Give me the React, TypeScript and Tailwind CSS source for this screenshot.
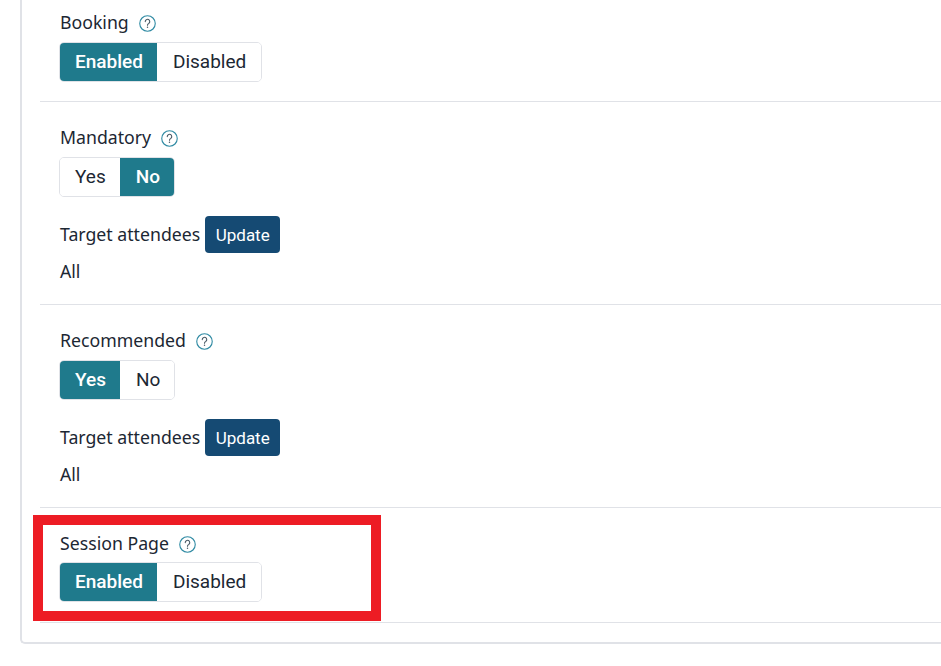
import type { ReactNode } from "react";

function HelpIcon() {
  return (
    <svg width="17" height="17" viewBox="0 0 16 16" fill="none" className="mt-[3px] shrink-0">
      <circle cx="8" cy="8" r="7.3" stroke="#2f8aa3" strokeWidth="1.05" />
      <path d="M5.9 6.2a2.1 2.1 0 1 1 3.3 1.7c-.8.5-1.2.9-1.2 1.8" stroke="#4a5a66" strokeWidth="1.05" strokeLinecap="round" />
      <circle cx="8" cy="11.6" r="0.7" fill="#4a5a66" />
    </svg>
  );
}

function Label({ text }: { text: string }) {
  return (
    <div className="flex h-[24px] items-center gap-[10px] pl-[1px] font-['Noto_Sans',sans-serif] text-[17.7px] text-[#1c2733]">
      <span>{text}</span>
      <HelpIcon />
    </div>
  );
}

function Toggle({ options, active, className }: { options: string[]; active: string; className: string }) {
  return (
    <div className={"flex h-[40px] w-fit overflow-hidden rounded-[5px] border border-[#e0e2e7] font-['Roboto',sans-serif] text-[19px] " + className}>
      {options.map((o, i) => (
        <div
          key={o}
          className={
            (i === 0 ? "pl-[15px] pr-[14px] " : o === "Disabled" ? "pl-[16px] pr-[15px] " : "pl-[16px] pr-[14px] ") +
            (o === active
              ? "flex items-center bg-[#1f7a8c] font-[480] text-white"
              : "flex items-center bg-white text-[#1c2733]")
          }
        >
          {o}
        </div>
      ))}
    </div>
  );
}

function Attendees() {
  return (
    <div className="pl-[1px] font-['Noto_Sans',sans-serif] text-[17.7px] text-[#1c2733]">
      <div className="mt-[19px] flex items-center gap-[5px]">
        <span>Target attendees</span>
        <button className="flex h-[37px] w-[75px] items-center justify-center rounded-[4px] bg-[#154a73] pt-[2px] font-['Roboto',sans-serif] text-[17px] text-white">
          Update
        </button>
      </div>
      <div className="mt-[6px] h-[24px] leading-[24px]">All</div>
    </div>
  );
}

function Section({ children, className }: { children: ReactNode; className: string }) {
  return <div className={"border-b border-[#e0e2e7] pl-[19px] " + className}>{children}</div>;
}

export default function App() {
  return (
    <div className="relative h-[666px] overflow-hidden bg-white pl-[20px]">
      <div className="h-[644px] rounded-bl-[5px] border-b-2 border-l-2 border-[#e0e2e7] pl-[18px]">
        <Section className="h-[102px] pt-[10px]">
          <Label text="Booking" />
          <Toggle options={["Enabled", "Disabled"]} active="Enabled" className="mt-[8px]" />
        </Section>
        <Section className="h-[203px] pt-[23px]">
          <Label text="Mandatory" />
          <Toggle options={["Yes", "No"]} active="No" className="mt-[8px]" />
          <Attendees />
        </Section>
        <Section className="h-[203px] pt-[23px]">
          <Label text="Recommended" />
          <Toggle options={["Yes", "No"]} active="Yes" className="mt-[8px]" />
          <Attendees />
        </Section>
        <Section className="h-[115px] pt-[23px]">
          <Label text="Session Page" />
          <Toggle options={["Enabled", "Disabled"]} active="Enabled" className="mt-[7px]" />
        </Section>
      </div>
      <div className="absolute left-[33px] top-[515px] h-[106px] w-[348px] border-[10px] border-[#ed1c24]" />
    </div>
  );
}
